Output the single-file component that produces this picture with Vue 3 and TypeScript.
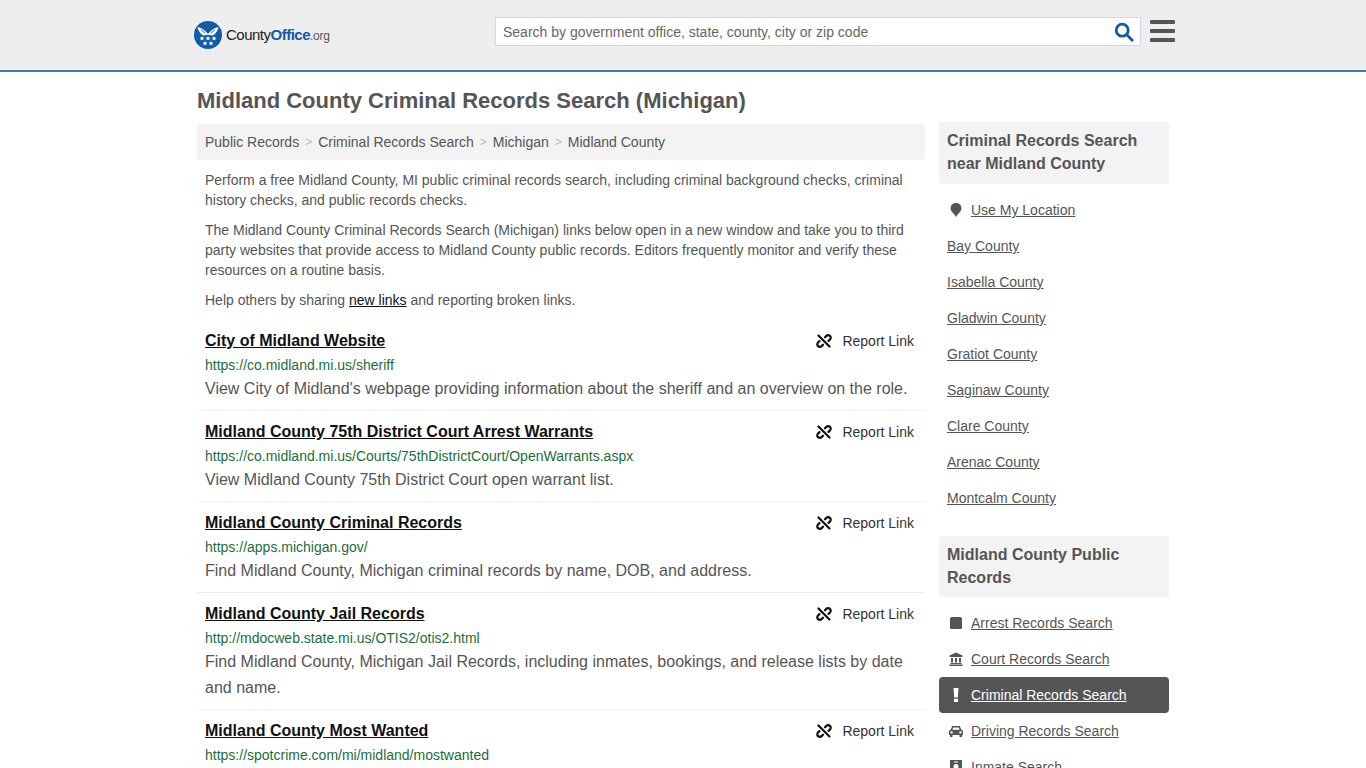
<script setup lang="ts">
interface Result {
  title: string
  url: string
  desc: string
}

const crumbs = ['Public Records', 'Criminal Records Search', 'Michigan', 'Midland County']

const results: Result[] = [
  {
    title: 'City of Midland Website',
    url: 'https://co.midland.mi.us/sheriff',
    desc: "View City of Midland's webpage providing information about the sheriff and an overview on the role.",
  },
  {
    title: 'Midland County 75th District Court Arrest Warrants',
    url: 'https://co.midland.mi.us/Courts/75thDistrictCourt/OpenWarrants.aspx',
    desc: 'View Midland County 75th District Court open warrant list.',
  },
  {
    title: 'Midland County Criminal Records',
    url: 'https://apps.michigan.gov/',
    desc: 'Find Midland County, Michigan criminal records by name, DOB, and address.',
  },
  {
    title: 'Midland County Jail Records',
    url: 'http://mdocweb.state.mi.us/OTIS2/otis2.html',
    desc: 'Find Midland County, Michigan Jail Records, including inmates, bookings, and release lists by date and name.',
  },
  {
    title: 'Midland County Most Wanted',
    url: 'https://spotcrime.com/mi/midland/mostwanted',
    desc: 'View Midland County most wanted list.',
  },
]

const nearby = [
  'Bay County',
  'Isabella County',
  'Gladwin County',
  'Gratiot County',
  'Saginaw County',
  'Clare County',
  'Arenac County',
  'Montcalm County',
]

const records = [
  { label: 'Arrest Records Search', icon: 'square' },
  { label: 'Court Records Search', icon: 'bank' },
  { label: 'Criminal Records Search', icon: 'alert', active: true },
  { label: 'Driving Records Search', icon: 'car' },
  { label: 'Inmate Search', icon: 'inmate' },
]

const star = 'M0-2.600l.7 1.700 1.800.1-1.400 1.100.5 1.800L0 1.100-1.600 2.100l.5-1.800-1.400-1.100 1.800-.1z'
const stars = [
  [8, 17.5],
  [14, 17.5],
  [20, 17.5],
  [11, 22.5],
  [17, 22.5],
]
</script>

<template>
  <div class="page">
    <header class="topbar">
      <div class="topbar-inner">
        <a class="logo" href="#">
          <svg class="logo-mark" width="28" height="28" viewBox="0 0 28 28">
            <circle cx="14" cy="14" r="14" fill="#0f5ba7" />
            <path d="M3.500 6c3 .6 6.500 2.400 8.600 5L14 12.800 15.900 11c2.100-2.600 5.600-4.400 8.600-5-.6 3.600-2.800 7.200-6.300 8.600L14 13.800l-4.200.8C6.300 13.200 4.100 9.600 3.500 6z" fill="#fff" />
            <path d="M7 8.800c1.700.9 3 2.200 4 3.700M21 8.800c-1.700.9-3 2.200-4 3.700" stroke="#0f5ba7" stroke-width=".9" fill="none" />
            <path v-for="s in stars" :key="s.join()" :d="star" :transform="`translate(${s[0]} ${s[1]})`" fill="#fff" />
          </svg>
          <span class="logo-text">County<b>Office</b><small>.org</small></span>
        </a>
        <div class="search">
          <span class="search-text">Search by government office, state, county, city or zip code</span>
          <svg width="20" height="20" viewBox="0 0 20 20" fill="none" stroke="#0f5ba7" stroke-width="2.800" stroke-linecap="round">
            <circle cx="8.200" cy="8.200" r="6" />
            <path d="M12.800 12.800l5.400 5.400" />
          </svg>
        </div>
        <div class="burger"><i></i><i></i><i></i></div>
      </div>
    </header>

    <div class="content">
      <h1>Midland County Criminal Records Search (Michigan)</h1>
      <div class="columns">
        <main class="main">
          <nav class="crumbs">
            <template v-for="(c, i) in crumbs" :key="c">
              <span v-if="i > 0" class="sep">&gt;</span>
              <a href="#">{{ c }}</a>
            </template>
          </nav>
          <div class="intro">
            <p>Perform a free Midland County, MI public criminal records search, including criminal background checks, criminal history checks, and public records checks.</p>
            <p>The Midland County Criminal Records Search (Michigan) links below open in a new window and take you to third party websites that provide access to Midland County public records. Editors frequently monitor and verify these resources on a routine basis.</p>
            <p>Help others by sharing <a href="#">new links</a> and reporting broken links.</p>
          </div>
          <article v-for="r in results" :key="r.title" class="result">
            <div class="result-head">
              <a class="result-title" href="#">{{ r.title }}</a>
              <span class="report">
                <svg width="16" height="16" viewBox="0 0 16 16" fill="none" stroke="#111" stroke-width="2.200" stroke-linecap="round">
                  <path d="M9 4.300l1.400-1.400a2.500 2.500 0 0 1 3.600 3.500l-1.500 1.500" />
                  <path d="M7 11.700l-1.400 1.400a2.500 2.500 0 0 1-3.600-3.500l1.500-1.500" />
                  <path d="M2.500 2.500l11 11" />
                </svg>
                Report Link
              </span>
            </div>
            <div class="result-url">{{ r.url }}</div>
            <p class="result-desc">{{ r.desc }}</p>
          </article>
        </main>

        <aside class="side">
          <h2 class="first">Criminal Records Search near Midland County</h2>
          <ul class="side-list">
            <li class="with-icon">
              <svg class="ico" width="14" height="14" viewBox="-1 0 14 14"><path d="M6 14C4 10.500.500 8.500.500 5a5.500 5 0 0 1 11 0C11.500 8.500 8 10.500 6 14z" fill="#555" /></svg>
              <a href="#">Use My Location</a>
            </li>
            <li v-for="n in nearby" :key="n"><a href="#">{{ n }}</a></li>
          </ul>
          <h2 class="second">Midland County Public Records</h2>
          <ul class="side-list">
            <li v-for="rec in records" :key="rec.label" class="with-icon" :class="{ active: rec.active }">
              <svg class="ico" width="14" height="14" viewBox="0 0 14 14" fill="currentColor">
                <rect v-if="rec.icon === 'square'" x="1" y="1" width="12" height="12" rx="1.500" />
                <path v-else-if="rec.icon === 'bank'" d="M7 .500l6.500 3V5h-13V3.500zM2 6h2v4.500H2zM6 6h2v4.500H6zM10 6h2v4.500h-2zM1.500 11h11v1h-11zM.500 12.500h13V14h-13z" />
                <path v-else-if="rec.icon === 'alert'" d="M4.500 0h5l-.7 9.500H5.200zM5 10.700h4V14H5z" />
                <path v-else-if="rec.icon === 'car'" d="M3.300 2h7.400l1.700 3.800c.9.200 1.600.9 1.600 1.900V11h-1v2h-2.500v-2h-7v2H1v-2H0V7.700c0-1 .7-1.700 1.600-1.900zM4.400 3.500L3.300 5.800h7.400L9.600 3.500zM2.600 7.200a1.200 1.200 0 1 0 0 2.400 1.200 1.200 0 0 0 0-2.400zm8.800 0a1.200 1.200 0 1 0 0 2.400 1.200 1.200 0 0 0 0-2.400z" fill-rule="evenodd" />
                <path v-else d="M1 0h12v14H1zM7 4a2.500 2.500 0 1 0 0 5 2.500 2.500 0 0 0 0-5zM5 1.500v1h4v-1z" fill-rule="evenodd" />
              </svg>
              <a href="#">{{ rec.label }}</a>
            </li>
          </ul>
        </aside>
      </div>
    </div>
  </div>
</template>

<style>
html,
body {
  margin: 0;
  background: #fff;
}
</style>

<style scoped>
.page {
  height: 768px;
  overflow: hidden;
  font-family: "Liberation Sans", Arial, sans-serif;
  font-size: 14px;
  line-height: 20px;
  color: #555;
}

a {
  color: inherit;
}

.topbar {
  height: 70px;
  background: #eee;
  border-bottom: 2px solid #3b7cb0;
}

.topbar-inner {
  display: flex;
  align-items: flex-start;
  width: 981px;
  margin-left: 194px;
}

.logo {
  display: flex;
  align-items: center;
  gap: 4px;
  margin-top: 21px;
  width: 301px;
  text-decoration: none;
}

.logo-text {
  font-size: 15px;
  letter-spacing: -0.5px;
  color: #222;
}

.logo-text b {
  font-weight: 700;
  color: #0f5ba7;
}

.logo-text small {
  font-size: 12px;
  color: #555;
  letter-spacing: -0.3px;
}

.search {
  display: flex;
  align-items: center;
  justify-content: space-between;
  box-sizing: border-box;
  width: 646px;
  height: 29px;
  margin-top: 17px;
  padding: 0 6px 0 7px;
  background: #fff;
  border: 1px solid #ccd9e6;
}

.search-text {
  color: #666;
}

.burger {
  display: flex;
  flex-direction: column;
  gap: 5px;
  margin: 20px 0 0 9px;
}

.burger i {
  display: block;
  width: 25px;
  height: 4px;
  border-radius: 1px;
  background: #555;
}

.content {
  width: 972px;
  margin-left: 197px;
}

h1 {
  margin: 0;
  padding-top: 16px;
  font-size: 22px;
  line-height: 26px;
  font-weight: 700;
  color: #555;
}

.columns {
  display: flex;
  gap: 14px;
  align-items: flex-start;
  margin-top: 8px;
}

.main {
  width: 728px;
  padding-top: 2px;
}

.crumbs {
  display: flex;
  align-items: center;
  gap: 6px;
  height: 36px;
  padding: 0 8px;
  background: #f3f3f3;
  border-radius: 3px;
}

.crumbs a {
  text-decoration: none;
}

.sep {
  color: #bbb;
  font-size: 12px;
}

.intro {
  padding: 10px 8px 0;
}

.intro p {
  margin: 0 0 10px;
}

.intro a {
  color: #111;
  text-decoration: underline;
}

.result {
  padding: 10px 8px 8px;
  border-bottom: 1px solid #eee;
}

.result-head {
  display: flex;
  justify-content: space-between;
  align-items: center;
  height: 22px;
}

.result-title {
  font-size: 16px;
  font-weight: 700;
  color: #111;
}

.report {
  display: flex;
  align-items: center;
  gap: 10px;
  padding-right: 3px;
  color: #333;
}

.result-url {
  margin-top: 3px;
  color: #1a6e3c;
}

.result-desc {
  margin: 1px 0 0;
  font-size: 16px;
  line-height: 26px;
}

.side {
  width: 230px;
}

h2 {
  margin: 0;
  padding: 7px 8px 8px;
  font-size: 16px;
  line-height: 23px;
  font-weight: 700;
  color: #555;
  background: #f3f3f3;
  border-radius: 3px;
}

h2.first {
  padding-bottom: 9px;
}

h2.second {
  margin-top: 20px;
}

.side-list {
  margin: 8px 0 0;
  padding: 0;
  list-style: none;
}

.side-list li {
  display: flex;
  align-items: center;
  height: 36px;
  padding: 0 8px;
  border-radius: 4px;
}

.with-icon {
  gap: 8px;
  padding-left: 10px !important;
}

.ico {
  flex: none;
  color: #555;
}

.active {
  background: #555;
  color: #fff;
}

.active .ico {
  color: #fff;
}
</style>
